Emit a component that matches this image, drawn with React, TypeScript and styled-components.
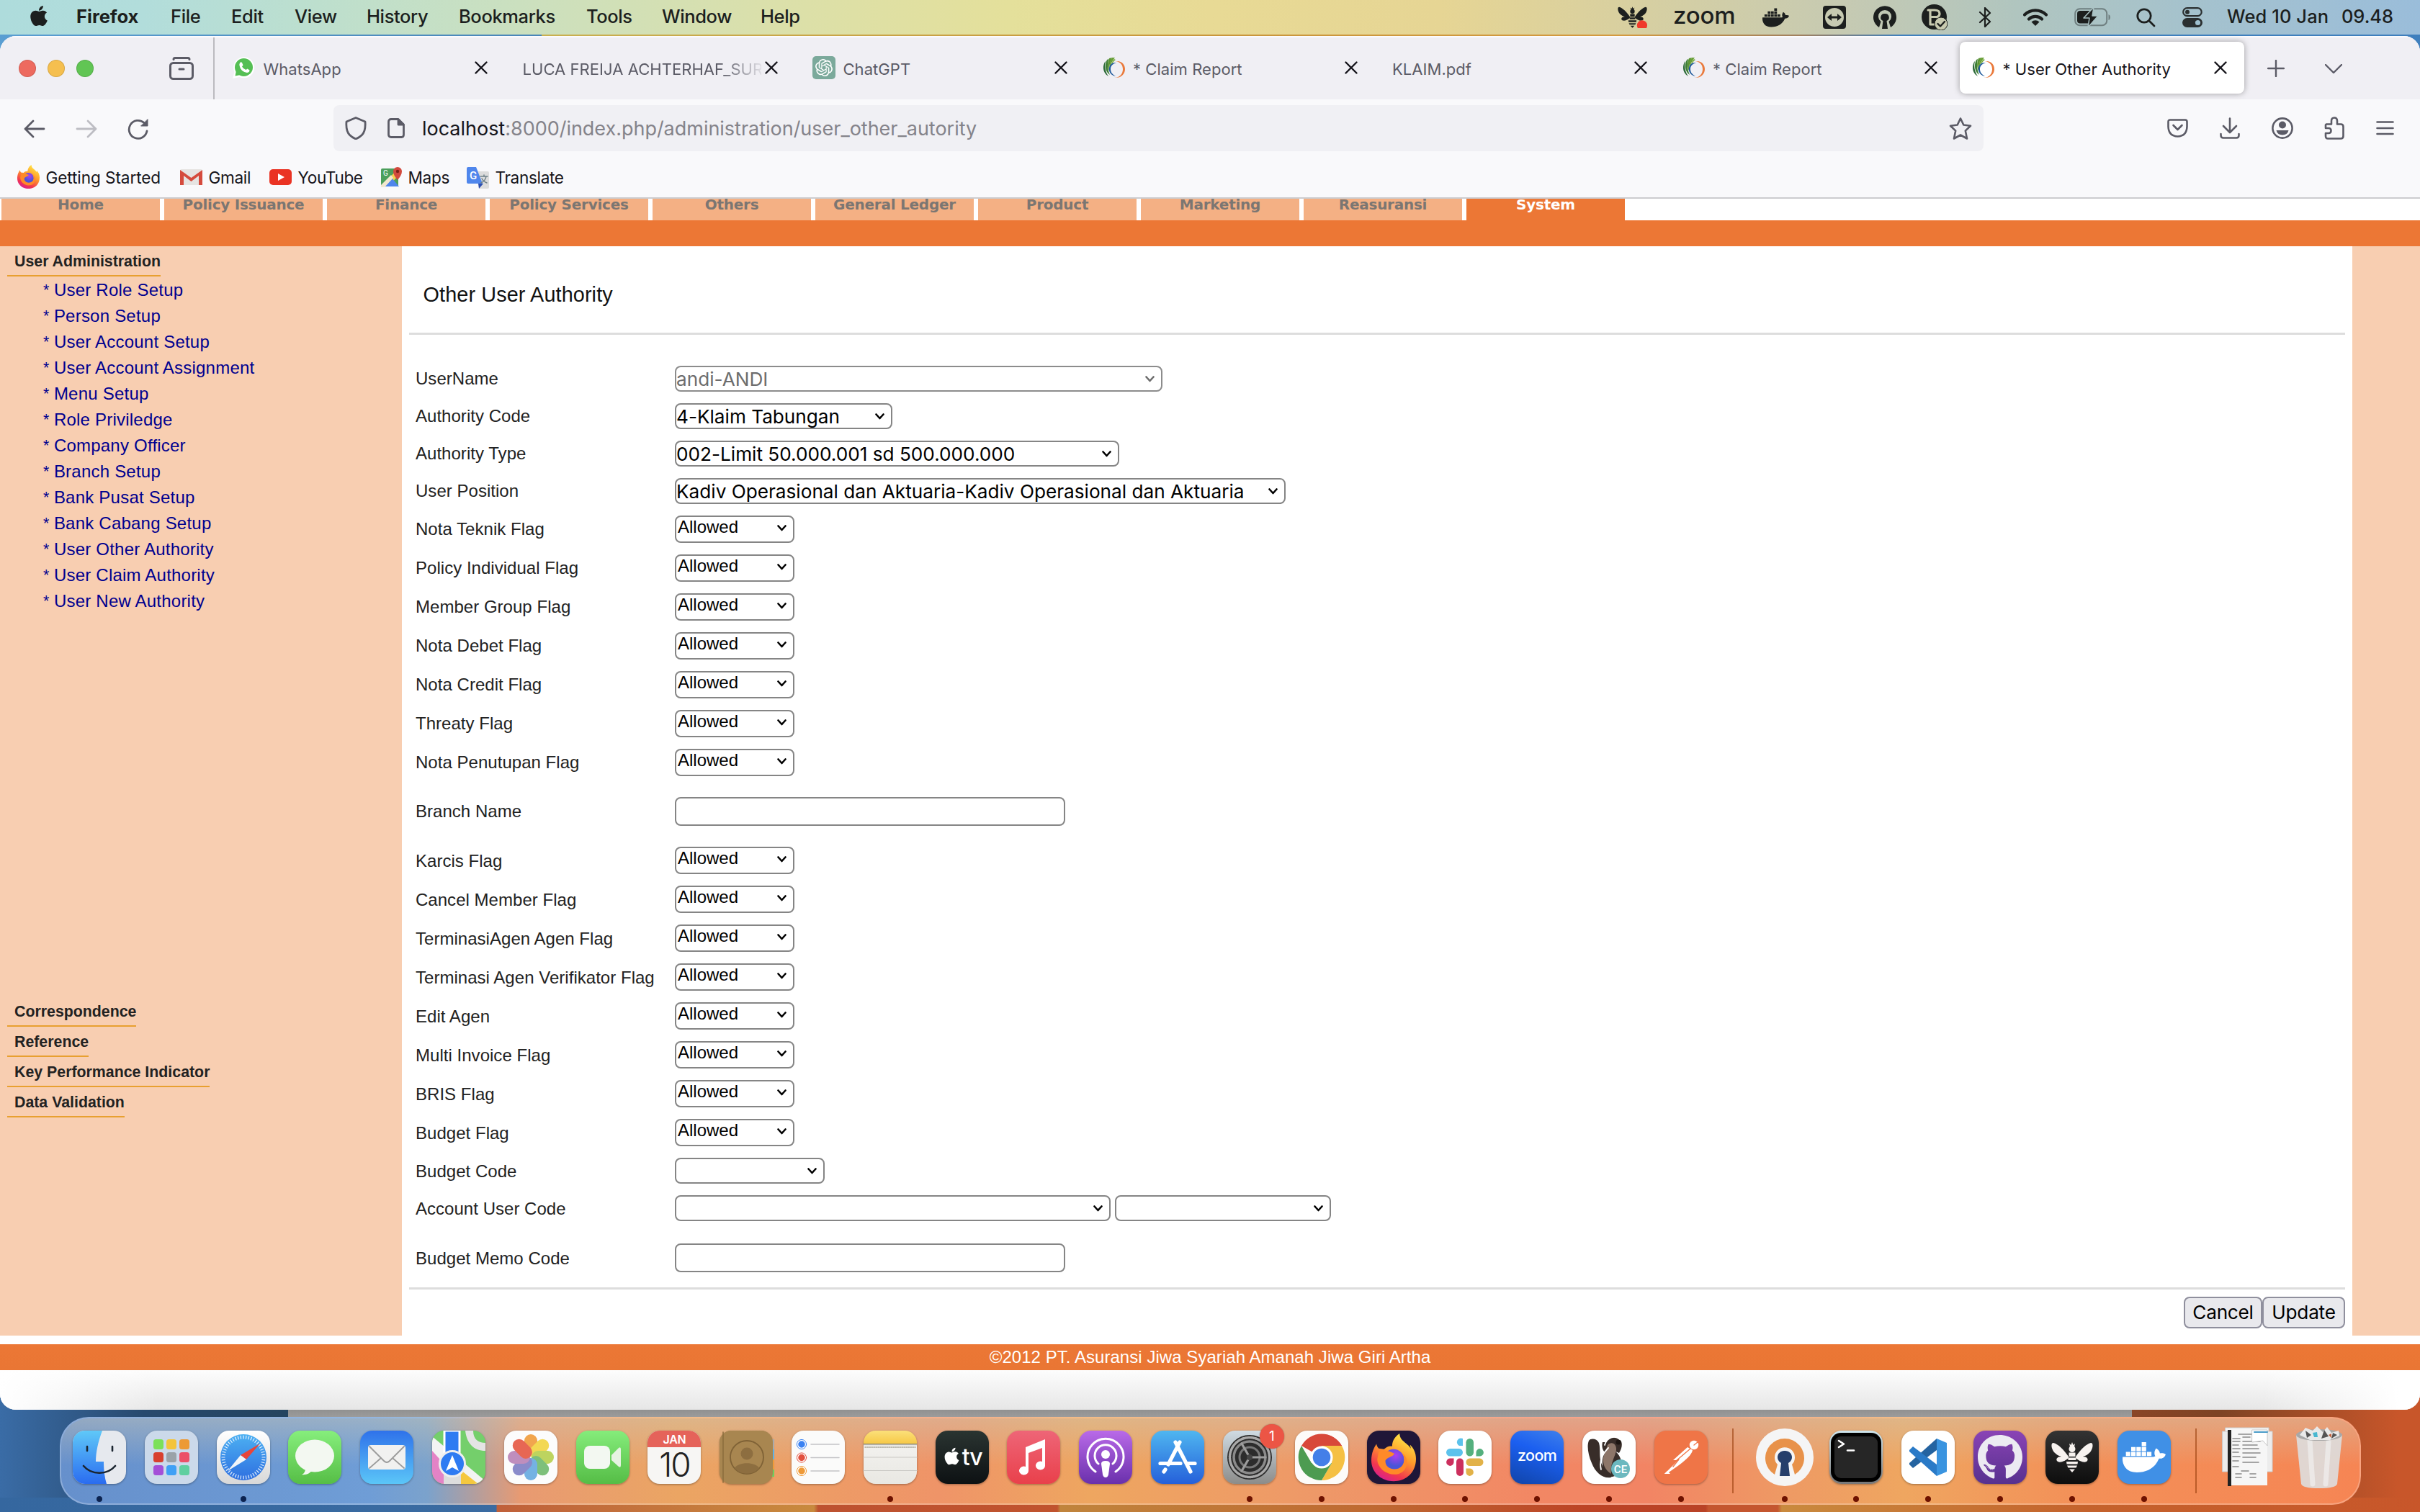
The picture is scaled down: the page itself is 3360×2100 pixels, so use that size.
import React from "react";
import styled, { createGlobalStyle } from "styled-components";
import { FaApple, FaDocker, FaGithub, FaWhatsapp } from "react-icons/fa";
import { SiOpenai } from "react-icons/si";

const UI = `Inter, "Liberation Sans", sans-serif`;
const PAGE = `"Liberation Sans", Arial, sans-serif`;

const Global = createGlobalStyle`
  * { box-sizing: border-box; }
  body { margin: 0; background: #3f7fbd; }
  svg { display: block; flex: none; }
`;

const Desktop = styled.div`
  width: 3360px;
  height: 2100px;
  overflow: hidden;
  display: flex;
  flex-direction: column;
  font-family: ${UI};
  background: linear-gradient(90deg, #5a9ed2 0, #4a86b8 752px, #c9b050 752px, #c9963c 1700px, #d49a40 2250px, #a08060 2500px, #4080bd 2640px, #3f7fbd 3360px);
`;

/* ---------- system menu bar ---------- */

const MenuBar = styled.header`
  height: 48px;
  margin-bottom: 2px;
  flex: none;
  display: flex;
  align-items: center;
  color: #1c1f1e;
  background: linear-gradient(90deg, #aedcdc 0, #b2dddb 200px, #bcdfcf 420px, #cbe0bf 720px, #dbe0aa 1080px, #e4e09b 1400px, #e8da95 1680px, #e6d594 2000px, #d9d09f 2240px, #c6cab2 2560px, #b0c5bf 2800px, #a5c2cd 3040px, #9abdda 3360px);
`;
const MenuApple = styled.div`
  width: 106px;
  padding-left: 38px;
  padding-bottom: 4px;
`;
const MenuItem = styled.span<{ $w: number; $bold?: boolean; $ls?: number }>`
  width: ${(p) => p.$w}px;
  font-size: 25.5px;
  line-height: 48px;
  height: 48px;
  padding-bottom: 2px;
  margin-top: -2px;
  white-space: nowrap;
  font-weight: ${(p) => (p.$bold ? 700 : 500)};
  letter-spacing: ${(p) => p.$ls ?? -0.38}px;
`;
const Tray = styled.div`
  margin-left: auto;
  display: flex;
  align-items: center;
`;
const TrayIcon = styled.div<{ $w: number }>`
  width: ${(p) => p.$w}px;
  height: 48px;
  flex: none;
  display: flex;
  align-items: center;
`;
const ZoomWord = styled.span<{ $size: number; $ls?: number }>`
  font-family: ${UI};
  font-weight: 500;
  font-size: ${(p) => p.$size}px;
  letter-spacing: ${(p) => p.$ls ?? 0}px;
  line-height: 1;
  padding-bottom: 5px;
`;

/* ---------- browser window ---------- */

const Window = styled.main`
  position: relative;
  height: 1908px;
  flex: none;
  display: flex;
  flex-direction: column;
  overflow: hidden;
  border-radius: 22px;
  background: #fff;
`;
const TabStrip = styled.div`
  height: 88px;
  flex: none;
  display: flex;
  background: #f0eff4;
  border-top: 2px solid #fbfbfd;
`;
const Lights = styled.div`
  width: 298px;
  display: flex;
  align-items: center;
  padding-left: 26px;
  gap: 16px;
  border-right: 2px solid #bbbabf;
`;
const Light = styled.i<{ $c: string }>`
  width: 24px;
  height: 24px;
  border-radius: 50%;
  background: ${(p) => p.$c};
  box-shadow: inset 0 0 0 1px rgba(0, 0, 0, 0.12);
`;
const Archive = styled.div`
  margin-left: 89px;
`;
const Tabs = styled.div`
  display: flex;
  align-items: flex-start;
  padding: 6px 0 0 8px;
  gap: 7.5px;
`;
const Tab = styled.div<{ $on?: boolean }>`
  width: 395px;
  height: 72px;
  display: flex;
  align-items: center;
  padding: 0 24px 0 17px;
  border-radius: 8px;
  color: ${(p) => (p.$on ? "#15141a" : "#5b5b66")};
  background: ${(p) => (p.$on ? "#fff" : "transparent")};
  box-shadow: ${(p) => (p.$on ? "0 0 8px rgba(0,0,0,.35)" : "none")};
`;
const TabIcon = styled.div`
  width: 42.5px;
  flex: none;
`;
const TabTitle = styled.span<{ $fade?: boolean }>`
  flex: 1;
  font-size: 22px;
  letter-spacing: 0.05px;
  line-height: 40px;
  padding-top: 3px;
  white-space: nowrap;
  overflow: hidden;
  margin-right: 5px;
  ${(p) => p.$fade && "mask-image: linear-gradient(90deg, #000 83%, transparent 102%);"}
`;
const StripButtons = styled.div`
  display: flex;
  align-items: center;
  padding: 0 0 0 32px;
  gap: 56px;
`;

const Toolbar = styled.div`
  height: 80px;
  flex: none;
  background: #f9f9fb;
  display: flex;
  align-items: flex-start;
  padding: 8px 36px 0 33px;
  color: #5b5b66;
`;
const NavButtons = styled.div`
  width: 430px;
  height: 66px;
  display: flex;
  align-items: center;
  gap: 42px;
`;
const UrlBar = styled.div`
  width: 2291px;
  height: 64px;
  border-radius: 8px;
  background: #f0f0f4;
  display: flex;
  align-items: center;
  padding: 0 16px;
`;
const Url = styled.span`
  margin-left: 24px;
  padding-top: 1px;
  flex: 1;
  font-size: 27px;
  letter-spacing: -0.02px;
  color: #84838a;
  b { font-weight: 400; color: #15141a; }
`;
const UrlIcons = styled.div`
  display: flex;
  align-items: center;
  gap: 29px;
`;
const ToolIcons = styled.div`
  flex: 1;
  height: 64px;
  padding-left: 255px;
  display: flex;
  align-items: center;
  justify-content: space-between;
`;
const Bookmarks = styled.div`
  height: 58px;
  flex: none;
  display: flex;
  align-items: center;
  padding-left: 24px;
  background: #f9f9fb;
  border-bottom: 2px solid #cccccf;
`;
const Bookmark = styled.div<{ $w: number; $ls?: number }>`
  width: ${(p) => p.$w}px;
  display: flex;
  align-items: center;
  gap: 8.5px;
  font-size: 22.6px;
  letter-spacing: ${(p) => p.$ls ?? -0.35}px;
  color: #15141a;
  white-space: nowrap;
`;

/* ---------- application page ---------- */

const ModuleNav = styled.nav`
  height: 30px;
  flex: none;
  display: flex;
  gap: 6px;
  padding-left: 2px;
  overflow: hidden;
`;
const ModuleTab = styled.a<{ $on?: boolean }>`
  width: 220px;
  height: 30px;
  text-align: center;
  font-family: "DejaVu Sans", Verdana, sans-serif;
  font-weight: 700;
  font-size: 20px;
  letter-spacing: -0.25px;
  line-height: 16px;
  color: ${(p) => (p.$on ? "#fff" : "#7b7672")};
  background: ${(p) => (p.$on ? "#ec7735" : "#f4b084")};
`;
const OrangeBand = styled.div`
  height: 36px;
  flex: none;
  background: #ec7735;
`;
const Columns = styled.div`
  height: 1513px;
  flex: none;
  display: flex;
`;
const Sidebar = styled.aside`
  width: 558px;
  background: #f8ceb1;
  padding-left: 10px;
  font-family: ${PAGE};
`;
const RightStrip = styled.div`
  width: 94px;
  background: #f8ceb1;
`;
const GroupTitle = styled.h3`
  margin: 0;
  height: 42px;
  width: max-content;
  padding: 8px 0 0 10px;
  border-bottom: 2px solid #e8a030;
  font-size: 21.33px;
  line-height: 26px;
  font-weight: 700;
  color: #222;
`;
const MenuList = styled.ul`
  list-style: none;
  margin: 0;
  padding: 1px 0 0 50px;
  height: 1000px;
`;
const MenuLink = styled.li`
  height: 36px;
  line-height: 36px;
  font-size: 24px;
  letter-spacing: 0.22px;
  color: #00008f;
  display: flex;
`;
const Star = styled.span`
  width: 8px;
  font-size: 21.33px;
`;
const Content = styled.section`
  flex: 1;
  padding: 0 10px;
  font-family: ${PAGE};
  color: #222;
`;
const Title = styled.h2`
  margin: 0;
  height: 123px;
  padding: 51px 0 0 19.500px;
  border-bottom: 3px solid #ddd;
  font-weight: 400;
  font-size: 28.8px;
  line-height: 33px;
  letter-spacing: 0.12px;
  color: #111;
`;
const Form = styled.div`
  padding: 35px 0 0 9px;
  height: 1323px;
`;
const Row = styled.div<{ $h: number; $top?: number }>`
  height: ${(p) => p.$h}px;
  padding-top: ${(p) => p.$top ?? 0}px;
  display: flex;
  align-items: center;
`;
const Label = styled.label<{ $low?: boolean }>`
  width: 360px;
  padding-top: ${(p) => (p.$low ? 2 : 0)}px;
  font-size: 24px;
  letter-spacing: 0.03px;
  white-space: nowrap;
`;
const Box = styled.div<{ $w: number; $h: number; $flag?: boolean; $off?: boolean }>`
  width: ${(p) => p.$w}px;
  height: ${(p) => p.$h}px;
  display: flex;
  justify-content: space-between;
  align-items: center;
  border: 2px solid ${(p) => (p.$off ? "#8c8c8c" : "#858585")};
  border-radius: 8px;
  padding: ${(p) => (p.$flag ? "0 9px 4px 2px" : "0 9px 0 0")};
  background: #fff;
  color: ${(p) => (p.$off ? "#6d6d6d" : "#000")};
  font-family: ${(p) => (p.$flag ? PAGE : UI)};
  font-size: ${(p) => (p.$flag ? 24 : 26.2)}px;
  line-height: 28px;
  letter-spacing: ${(p) => (p.$flag ? 0 : -0.01)}px;
  white-space: nowrap;
  & + & { margin-left: 6px; }
  span { padding: ${(p) => (p.$flag ? "0 0 3px" : "1px 0 0")}; }
`;
const Actions = styled.div`
  border-top: 3px solid #ddd;
  display: flex;
  justify-content: flex-end;
  padding-top: 10px;
`;
const Button = styled.div<{ $w: number }>`
  width: ${(p) => p.$w}px;
  height: 44px;
  border: 2px solid #8f8f9d;
  border-radius: 8px;
  background: #e9e9ed;
  color: #000;
  font-family: ${UI};
  font-size: 26.2px;
  letter-spacing: -0.25px;
  line-height: 40px;
  text-align: center;
`;
const Footer = styled.div`
  margin-top: 12px;
  height: 36px;
  flex: none;
  background: linear-gradient(#ec7735, #e97634);
  color: #fff;
  font-family: ${PAGE};
  font-size: 24px;
  letter-spacing: 0.05px;
  line-height: 36px;
  text-align: center;
`;
const PageEnd = styled.div`
  flex: 1;
  background: linear-gradient(90deg, #fff 0, rgba(255, 255, 255, 0) 220px, rgba(255, 255, 255, 0) 3140px, #fff 3330px),
    linear-gradient(#fdfdfd, #e6e6e6);
`;

/* ---------- dock ---------- */

const DockArea = styled.div`
  flex: 1;
  margin-top: -30px;
  padding: 40px 0 0 83px;
  background:
    linear-gradient(#8f8f8f, #9d9d9d) 400px 29px / 2560px 12px no-repeat,
    linear-gradient(90deg, #35679f 0, #3a6ba1 689px, #c0603a 690px, #c88a3e 1130px, #bd5230 1136px, #c0532e 1468px, #c0843c 1472px, #bf6a32 1900px, #bc4426 2200px, #b94226 2368px, #c4562f 2372px, #c4562f 2468px, #c98a3e 2474px, #c4622c 2900px, #c8562a 3360px) 0 100% / 100% 20px no-repeat,
    linear-gradient(90deg, #3a6ca6 0, #27496e 200px, #24445f 400px, #8a4526 2960px, #7d4324 3080px, #c8562a 3330px);
`;
const Dock = styled.div`
  width: 3195px;
  height: 122px;
  display: flex;
  padding-left: 3px;
  border-radius: 40px;
  border: 2px solid rgba(255, 255, 255, 0.25);
  background: linear-gradient(180deg, rgba(205, 200, 180, 0.45), rgba(205, 200, 180, 0) 55%) padding-box,
    linear-gradient(90deg, #6690cc 0, #6f9dd6 430px, #7ba2cc 510px, #e89a72 640px, #eba563 860px, #ef9468 1220px, #eea660 1430px, #ee9868 1750px, #f28764 2050px, #f28464 2200px, #ee9a64 2400px, #efa660 2560px, #f39058 2800px, #f68554 3195px) border-box;
  background-color: #e89a72;
`;
const Slot = styled.div`
  width: 99.82px;
  flex: none;
  display: flex;
  flex-direction: column;
  align-items: center;
  padding-top: 17px;
`;
const Divider = styled.div`
  width: 44px;
  flex: none;
  display: flex;
  justify-content: center;
  padding-top: 14px;
  &::before { content: ""; width: 2px; height: 90px; background: rgba(150, 60, 10, 0.6); }
`;
const Tile = styled.div<{ $bg: string; $plain?: boolean }>`
  position: relative;
  width: 74px;
  height: 74px;
  flex: none;
  border-radius: 17px;
  display: flex;
  align-items: center;
  justify-content: center;
  color: #fff;
  background: ${(p) => p.$bg};
  box-shadow: ${(p) => (p.$plain ? "none" : "0 1px 3px rgba(0,0,0,.35)")};
  svg { overflow: visible; }
`;
const Clip = styled.div`
  width: 74px;
  height: 74px;
  border-radius: 17px;
  overflow: hidden;
`;
const Dot = styled.i<{ $c: string }>`
  width: 8px;
  height: 8px;
  margin-top: 17px;
  border-radius: 50%;
  background: ${(p) => p.$c};
`;
const Badge = styled.span`
  position: absolute;
  left: 51px;
  top: -9px;
  width: 34px;
  height: 34px;
  border-radius: 50%;
  background: #ec5545;
  font-size: 19px;
  line-height: 34px;
  text-align: center;
  box-shadow: 0 0 2px rgba(0, 0, 0, 0.4);
`;
const Calendar = styled.div`
  width: 74px;
  height: 74px;
  text-align: center;
  color: #222;
  font-size: 46px;
  line-height: 48px;
  letter-spacing: -2px;
  font-weight: 300;
  border-radius: 17px;
  overflow: hidden;
  b {
    display: block;
    height: 23px;
    background: #e5635a;
    color: #fff;
    font-size: 16px;
    font-weight: 600;
    line-height: 25px;
    letter-spacing: -0.3px;
  }
`;
const TvWord = styled.div`
  display: flex;
  align-items: center;
  font-size: 32px;
  font-weight: 500;
  letter-spacing: -1px;
  line-height: 32px;
  svg { margin: 0 1px 4px 0; }
`;

const S: React.FC<{ w?: number; h?: number; vb?: string; sw?: number; stretch?: boolean; children: React.ReactNode }> = ({ w = 74, h = w, vb, sw, stretch, children }) => (
  <svg width={w} height={h} viewBox={vb ?? `0 0 ${w} ${h}`} preserveAspectRatio={stretch ? "none" : undefined} fill="none" stroke={sw ? "currentColor" : "none"} strokeWidth={sw} strokeLinecap="round" strokeLinejoin="round">
    {children}
  </svg>
);

const CloseX = () => (
  <S w={18} sw={2.4}>
    <g stroke="#15141a"><path d="M1.5 1.5 16.5 16.5M16.5 1.5 1.5 16.5" /></g>
  </S>
);

const Swirl = () => (
  <S w={31} h={30}>
    <path d="M3 7C-1 15 1 23 8 27C4 21 2 14 4 6Z" fill="#2f6b3a" />
    <path d="M6 4C2 12 4 21 10 25C7 18 6 11 8 3Z" fill="#3f7f35" />
    <path d="M9 2C6 9 7 15 9 19C9 13 10 7 13 1Z" fill="#5b9434" />
    <path d="M13 1C10 6 9 11 10 15C11 10 13 6 17 1Z" fill="#69a036" />
    <path d="M16 3C13 6 12 9 12 12C13 9 15 6 18 4Z" fill="#7aad3e" />
    <path d="M19 8C11 7 8 14 9 19C10 23 13 26 18 27C13 24 11 21 11 17C11 13 13 10 19 8Z" fill="#1f5a9c" />
    <path d="M18 6C27 5 31 11 31 17C31 24 25 30 16 29C24 29 28 23 28 17C28 12 25 7 18 6Z" fill="#ea7a3c" />
  </S>
);

const Chevron: React.FC<{ c?: string }> = ({ c = "#000" }) => (
  <S w={13} h={9} sw={2.6}><g stroke={c}><path d="M1.5 1.5 6.5 7 11.5 1.5" /></g></S>
);

/* wings, head and striped body on a 58 x 42 grid */
const BeePath = () => (
  <g>
    <path d="M24 20C18 11 9 2 3 1C-1 1 0 9 4 14C8 18 11 19 14 20C9 20 6 23 8 26C11 30 20 26 24 22Z" />
    <path d="M34 20C40 11 49 2 55 1C59 1 58 9 54 14C50 18 47 19 44 20C49 20 52 23 50 26C47 30 38 26 34 22Z" />
    <path d="M25 2 27.500 4 29 0 30.500 4 33 2 32 6H26Z" />
    <circle cx="29" cy="9.500" r="4.500" />
    <path d="M24.500 14.500H33.500V20H24.500ZM23.500 21.500H34.500V25H23.500ZM21 27H37L36.500 30.500H21.500ZM22 32.500H36L34.500 35.500H23.500ZM25 37.500H33L29 42Z" />
  </g>
);

const FoxLogo: React.FC<{ s: number }> = ({ s }) => (
  <S w={s} h={s * 1.07} vb="0 0 60 64">
    <defs>
      <linearGradient id="fx" x1=".8" y1="0" x2=".3" y2="1"><stop stopColor="#fff04a" /><stop offset=".45" stopColor="#ff9a2a" /><stop offset=".8" stopColor="#f2364f" /><stop offset="1" stopColor="#d81f90" /></linearGradient>
      <radialGradient id="fp" cx=".6" cy=".3"><stop stopColor="#b13df0" /><stop offset="1" stopColor="#4a55d8" /></radialGradient>
    </defs>
    <path d="M7 14C4 18 0 26 0 36C0 52 13 64 30 64C47 64 60 52 60 34C60 26 57 20 52 15L53 20C48 12 38 10 38 0C30 5 28 12 28 17C24 16 20 18 17 21L10 20C8 18 7 16 7 14Z" fill="url(#fx)" />
    <circle cx="30" cy="35" r="14" fill="url(#fp)" />
    <path d="M10 24C18 21 25 24 31 27C28 32 22 31 19 36C18 44 26 50 36 47C45 44 46 34 42 27C51 32 50 50 37 54C22 58 8 47 8 34Z" fill="#ff8a28" />
  </S>
);

const tabs: { title: string; icon?: React.ReactNode; on?: boolean; fade?: boolean }[] = [
  { title: "WhatsApp", icon: <S w={30} h={32}><path d="M0 31 2.500 22A14.500 14.500 0 1 1 9.500 29Z" fill="#fff" /><circle cx="15.500" cy="15.500" r="12.500" fill="#55bf54" /><path d="M3.500 27.500 5 20 11 26Z" fill="#55bf54" /><path d="M10 9.500Q11.500 7.500 13 9L14.500 12.500L13 14.500Q15 18 18.500 19L20.500 17.500L23.500 19.500Q23.500 22.500 20 23Q11 21.500 9.500 13Q9 11 10 9.500Z" fill="#fff" /></S> },
  { title: "LUCA FREIJA ACHTERHAF_SUR", fade: true },
  { title: "ChatGPT", icon: <S w={32}><rect width="32" height="32" rx="5" fill="#7ba99b" /><g color="#fff"><SiOpenai x={4} y={4} size={24} /></g></S> },
  { title: "* Claim Report", icon: <Swirl /> },
  { title: "KLAIM.pdf" },
  { title: "* Claim Report", icon: <Swirl /> },
  { title: "* User Other Authority", icon: <Swirl />, on: true },
];

const menus: [string, number][] = [["File", 84], ["Edit", 88], ["View", 100], ["History", 128], ["Bookmarks", 177], ["Tools", 105], ["Window", 137], ["Help", 60]];

const modules = ["Home", "Policy Issuance", "Finance", "Policy Services", "Others", "General Ledger", "Product", "Marketing", "Reasuransi", "System"];
const links = ["User Role Setup", "Person Setup", "User Account Setup", "User Account Assignment", "Menu Setup", "Role Priviledge", "Company Officer", "Branch Setup", "Bank Pusat Setup", "Bank Cabang Setup", "User Other Authority", "User Claim Authority", "User New Authority"];
const groups = ["Correspondence", "Reference", "Key Performance Indicator", "Data Validation"];
const choices: [string, string, number, boolean?][] = [
  ["UserName", "andi-ANDI", 677, true],
  ["Authority Code", "4-Klaim Tabungan", 302],
  ["Authority Type", "002-Limit 50.000.001 sd 500.000.000", 617],
  ["User Position", "Kadiv Operasional dan Aktuaria-Kadiv Operasional dan Aktuaria", 848],
];
const flagsA = ["Nota Teknik Flag", "Policy Individual Flag", "Member Group Flag", "Nota Debet Flag", "Nota Credit Flag", "Threaty Flag", "Nota Penutupan Flag"];
const flagsB = ["Karcis Flag", "Cancel Member Flag", "TerminasiAgen Agen Flag", "Terminasi Agen Verifikator Flag", "Edit Agen", "Multi Invoice Flag", "BRIS Flag", "Budget Flag"];

const FlagRow: React.FC<{ name: string; low?: boolean }> = ({ name, low }) => (
  <Row $h={54}>
    <Label $low={low}>{name}</Label>
    <Box $w={166} $h={38} $flag><span>Allowed</span><Chevron /></Box>
  </Row>
);

const petals = ["#f09a37", "#f2d43c", "#b5cf4a", "#6db86a", "#62a8e0", "#7b7cc4", "#b77fb5", "#e5533d"];
const pads = ["#7be05a", "#f4c43a", "#ec9a35", "#d8402f", "#9aa2a8", "#ec5068", "#a44fd8", "#3fa0f5", "#5fcfa0"];
const ticks = Array.from({ length: 48 }, (_, i) => i * 7.5);

const blue = "#0c2350";
const red = "#6e1200";
const dockLeft: { bg: string; art: React.ReactNode; dot?: string; plain?: boolean }[] = [
  { bg: "#e6e9ee", dot: blue, art: <Clip><S><defs><linearGradient id="fi" x2="0" y2="1"><stop stopColor="#5fc8f8" /><stop offset="1" stopColor="#2a6cf0" /></linearGradient></defs><path d="M0 0H41C35 16 32 30 32 43H43C43 54 44 64 47 74H0Z" fill="url(#fi)" /><g stroke="#1a2530" strokeWidth="2.600" strokeLinecap="round"><path d="M20 22V28M55 22V28M15 49C26 62 48 62 59 49" /></g></S></Clip> },
  { bg: "#cbd9ea", art: <S>{pads.map((c, i) => <rect key={i} x={12 + (i % 3) * 18} y={12 + Math.floor(i / 3) * 18} width="14" height="14" rx="3.500" fill={c} />)}</S> },
  { bg: "linear-gradient(#fff,#d8d8d8)", dot: blue, art: <S><defs><linearGradient id="sf" x2="0" y2="1"><stop stopColor="#4cb0f2" /><stop offset="1" stopColor="#2e6fe0" /></linearGradient></defs><circle cx="37" cy="37" r="32" fill="url(#sf)" /><g stroke="#e6f2ff" strokeWidth="1.200">{ticks.map((a) => <path key={a} d="M37 7V11" transform={`rotate(${a} 37 37)`} />)}</g><path d="M60 18 41 40 33 34Z" fill="#e8453a" /><path d="M15 56 33 34 41 40Z" fill="#f2f5f8" /></S> },
  { bg: "linear-gradient(#86ee7c,#56be46)", art: <S><ellipse cx="37" cy="35" rx="27" ry="22.500" fill="#f3f8f1" /><path d="M24 52C24 57 22 60 19 61C25 62 31 59 33 55Z" fill="#f3f8f1" /></S> },
  { bg: "linear-gradient(#2f72ea,#5bc6f8)", art: <S><rect x="11" y="20" width="52" height="34" rx="4" fill="#f1f1f0" /><path d="M13 22 33 42Q37 46 41 42L61 22M13 52 29 38M61 52 45 38" stroke="#9b9b9b" strokeWidth="1.800" /></S> },
  { bg: "#75cf6c", art: <Clip><S><rect width="74" height="74" fill="#74cf6b" /><path d="M0 8 74 70V84L0 34Z" fill="#f3f3f3" /><path d="M0 28 20 50V74H0Z" fill="#e383c6" /><path d="M46 0C48 18 58 28 74 28V17C64 17 57 12 57 0Z" fill="#e4e4e4" /><path d="M40 74 40 55 64 74Z" fill="#f5c83f" /><path d="M16 40H40V74H16Z" fill="#ddd" /><path d="M17 0H38V40H17Z" fill="#2e7bf2" stroke="#fff" strokeWidth="3" /><circle cx="28" cy="46" r="17.500" fill="#2e7bf2" stroke="#eee" strokeWidth="3" /><path d="M28 34 37 56 28 51 19 56Z" fill="#fff" /></S></Clip> },
  { bg: "#fcfcfc", art: <S><g opacity=".88">{petals.map((c, i) => <rect key={c} x="28" y="5" width="18" height="31" rx="9" fill={c} transform={`rotate(${i * 45} 37 37)`} />)}</g></S> },
  { bg: "linear-gradient(#85ec7b,#55bd46)", art: <S><rect x="11" y="21" width="36" height="32" rx="8" fill="#f3f8f1" /><path d="M49 34 59 24Q62 22 62 26V48Q62 52 59 50L49 41Z" fill="#e6f3e2" /></S> },
  { bg: "#f7f6f4", art: <Calendar><b>JAN</b>10</Calendar> },
  { bg: "#a5834f", art: <S><path d="M72 12H76V26H72Z" fill="#aaa" /><path d="M72 26H76V40H72Z" fill="#5fb2e8" /><path d="M72 40H76V54H72Z" fill="#f09a3a" /><path d="M72 54H76V64H72Z" fill="#6fce5e" /><rect width="74" height="74" rx="16" fill="#a88650" /><path d="M5 2V72" stroke="#8a6b3c" strokeWidth="1.500" /><circle cx="38" cy="37" r="23" stroke="#7f6236" strokeWidth="1.800" /><circle cx="38" cy="32" r="8.500" fill="#8d6e40" /><path d="M21 52C26 43 50 43 55 52C47 62 29 62 21 52Z" fill="#8d6e40" /></S> },
  { bg: "#fbfbfa", art: <S>{["#3a82f2", "#e2513f", "#ef9a38"].map((c, i) => <g key={c}><circle cx="14" cy={19 + i * 18.5} r="5.500" fill={c} stroke="#fff" strokeWidth="1.500" /><circle cx="14" cy={19 + i * 18.5} r="6.600" stroke={c} strokeWidth="1" /><path d={`M27 ${19 + i * 18.5}H66`} stroke="#c4c4c6" strokeWidth="1.500" /></g>)}</S> },
  { bg: "linear-gradient(#fbe07a 0,#f7c948 24%,#8f8a78 25%,#f2f1ee 28%,#e9e8e3)", dot: red, art: <S><path d="M2 23H72" stroke="#a9a69b" strokeWidth="1.500" strokeDasharray="1.500 1.500" /><path d="M0 37H74M0 55.500H74" stroke="#c9c8c4" strokeWidth="1.200" /></S> },
  { bg: "linear-gradient(#2a3431,#0d1113)", art: <TvWord><FaApple size={27} />tv</TvWord> },
  { bg: "linear-gradient(#ee6577,#e9404b)", art: <S><path d="M26 23 53 12V48A6.500 6 0 1 1 49 43V24L30 31V55A6.500 6 0 1 1 26 50Z" fill="#fff" /></S> },
  { bg: "linear-gradient(#b96ae8,#6a30ac)", art: <S><g stroke="#fff" strokeWidth="3" strokeLinecap="round"><path d="M23 57A25 25 0 1 1 51 57" /><path d="M27 46A15 15 0 1 1 47 46" /></g><circle cx="37" cy="33" r="6" fill="#fff" /><path d="M31 46Q31 42 37 42Q43 42 43 46L41 61Q40 65 37 65Q34 65 33 61Z" fill="#fff" /></S> },
  { bg: "linear-gradient(#4fb6f0,#2560da)", art: <S><g stroke="#fff" strokeWidth="5.200" strokeLinecap="round"><path d="M40 16 24 47M20 54 18 57M34 16 55 57M13 45.500H41M52 45.500H61" /></g></S> },
  { bg: "linear-gradient(#cfdbe3,#8c8c8a)", dot: red, art: <><S><circle cx="37" cy="37" r="31" fill="#2c2c2c" /><circle cx="37" cy="37" r="27.500" stroke="#a9a9a9" strokeWidth="3.500" strokeDasharray="1.800 1.400" /><circle cx="37" cy="37" r="22" stroke="#8b8b8b" strokeWidth="3.500" /><circle cx="37" cy="37" r="14" stroke="#777" strokeWidth="3" /><g stroke="#9c9c9c" strokeWidth="3.200"><path d="M37 37H59M37 37 26 18M37 37 26 56" /></g><circle cx="37" cy="37" r="4" fill="#444" /></S><Badge>1</Badge></> },
  { bg: "#fdfbf9", dot: red, art: <S><path d="M37 37 9 21A32 32 0 0 1 65 21H37Z" fill="#d8483a" /><path d="M37 5A32 32 0 0 1 65 21H37Z" fill="#d8483a" /><path d="M65 21A32 32 0 0 1 37 69L51 45 37 21Z" fill="#f5c043" /><path d="M9 21A32 32 0 0 0 37 69L51 45 23 45Z" fill="#4d9b51" /><circle cx="37" cy="37" r="15.500" fill="#fff" /><circle cx="37" cy="37" r="12.300" fill="#447fe8" /></S> },
  { bg: "#1f1638", dot: red, art: <FoxLogo s={62} /> },
  { bg: "#fff", dot: red, art: <S><g fill="#5cc2ec"><path d="M34 11V21H29A5 5 0 1 1 34 11Z" /><rect x="11" y="25" width="23" height="10.500" rx="5.200" /></g><g fill="#55b07e"><rect x="38.500" y="11" width="10.500" height="24.500" rx="5.200" /><path d="M52.500 35.500V30A5.200 5.200 0 1 1 58 35.500Z" /></g><g fill="#e2b248"><rect x="38.500" y="38.500" width="24" height="10.500" rx="5.200" /><path d="M38.500 52.500H44A5.200 5.200 0 1 1 38.500 58Z" /></g><g fill="#cc2f5d"><rect x="25" y="38.500" width="10" height="24.500" rx="5" /><path d="M21.500 38.500V44A5.200 5.200 0 1 1 16 38.500Z" /></g></S> },
  { bg: "linear-gradient(200deg,#3f80ea,#1b5ff0 40%,#1044a8)", dot: red, art: <ZoomWord $size={21.5} $ls={-0.6}>zoom</ZoomWord> },
  { bg: "#fff", dot: red, art: <S><path d="M9 14C12 10 20 11 23 17C26 27 22 38 28 49C32 56 37 60 40 65C28 67 18 58 13 45C8 34 6 21 9 14Z" fill="#382d29" /><path d="M28 16H33C36 8 49 7 54 15C56 20 54 26 51 31L46 29C52 34 54 40 55 48C54 60 44 66 36 64C26 54 26 40 31 30C27 26 27 20 28 16Z" fill="#382d29" /><path d="M35 20C40 14 48 18 47 27C46 36 38 46 40 60C30 54 26 42 31 32Z" fill="#8d7669" /><circle cx="50" cy="16" r="3.500" fill="#1d1613" /><path d="M31 20C34 9 45 6 52 12M26 54C23 42 28 32 36 24" stroke="#fff" strokeWidth="1.800" /><circle cx="53" cy="53" r="13" fill="#6cb8bf" /><text x="53" y="58.500" fontFamily="Roboto, sans-serif" fontSize="15" fontWeight="500" textAnchor="middle" fill="#fff">CE</text></S> },
  { bg: "#ef7547", dot: red, art: <S><circle cx="55" cy="20" r="6.200" fill="#fff" /><path d="M46 23 53 27C52 34 42 42 34 48L17 60H14L24 50 33 41 26 41Z" fill="#fff" /><path d="M14 60 18 56 22 60Z" fill="#fff" /><path d="M55 20 60 16M50 25 30 42M34 40 26 50" stroke="#ef7547" strokeWidth="1.300" /></S> },
];
const dockRight: typeof dockLeft = [
  { bg: "transparent", plain: true, dot: red, art: <S w={80} vb="0 0 80 80"><circle cx="40" cy="40" r="40" fill="#f5f5f5" /><path d="M26 64A27 27 0 1 1 54 64L50 50A14 14 0 1 0 30 50Z" fill="#e8924a" /><path d="M40 31A9 9 0 0 1 45 48L47 66H33L35 48A9 9 0 0 1 40 31Z" fill="#263f6b" /></S> },
  { bg: "linear-gradient(#cfe6ee,#777)", dot: red, art: <S><rect x="2" y="3" width="70" height="68" rx="14" fill="#000" /><rect x="7" y="8" width="60" height="58" rx="9" fill="#262626" /><path d="M13 14 20 18.500 13 23M25 27.500H34" stroke="#fff" strokeWidth="2.600" /></S> },
  { bg: "#fff", dot: red, art: <S><path d="M49 11V27L16 52 11 47V45Z" fill="#2463a0" /><path d="M49 63V47L16 22 11 27V29Z" fill="#2a7ac7" /><path d="M49 11 63 17V57L49 63Z" fill="#3a94e0" /></S> },
  { bg: "linear-gradient(#8a43b5,#57318f)", dot: red, art: <FaGithub size={64} color="#eceaf2" /> },
  { bg: "linear-gradient(#333,#0d0d0d)", dot: red, art: <S w={58} h={42}><g fill="#f7f2ef"><BeePath /></g></S> },
  { bg: "#4090e6", dot: red, art: <FaDocker size={60} /> },
];

const Docs = () => (
  <S w={69} h={82}>
    <rect x="4" y="0" width="60" height="60" fill="#f7f7f7" stroke="#ccc" />
    <rect x="0" y="5" width="69" height="56" fill="#ececec" stroke="#ccc" />
    <path d="M7 3H62V80H7Z" fill="#f6f6f6" />
    <path d="M7 3H12V81H7Z" fill="#222" />
    <path d="M22 9H44M14 15H24M28 13H38M14 19H24M28 19H52M14 24H22M28 24H48M14 29H24M28 29H50M14 34H22M28 35H52M14 40H24M28 41H46M14 46H22M28 48H50M14 54H22M26 60H36M18 64H26M38 64H46M18 69H26M38 69H46" stroke="#8b8b8b" strokeWidth="1.600" />
    <path d="M41 3H62V25L56 18 41 20Z" fill="#fff" stroke="#bbb" strokeWidth=".8" />
    <path d="M44 6H62" stroke="#4a9cc8" strokeWidth="2" />
  </S>
);
const Trash = () => (
  <S w={66} h={86}>
    <path d="M1 12H65L58 80Q56 86 33 86Q10 86 8 80Z" fill="#dedcda" fillOpacity=".93" />
    <path d="M20 20 24 80M46 22 42 80" stroke="#f4f4f4" strokeWidth="7" opacity=".6" />
    <ellipse cx="33" cy="12" rx="32" ry="8" fill="#a8a8a8" />
    <path d="M6 12 14 2 24 6 30 0 38 8 44 1 50 9 60 6 61 13 48 19 20 19Z" fill="#e9e9e9" />
    <path d="M14 6 22 12 16 16ZM40 5 46 14 36 17ZM52 9 58 12 50 17Z" fill="#555" />
    <path d="M24 9 30 8 31 15 26 15Z" fill="#49b7d0" />
    <path d="M46 12 50 10 50 16Z" fill="#c0603a" />
  </S>
);

export default function App() {
  return (
    <Desktop>
      <Global />
      <MenuBar>
        <MenuApple><FaApple size={32} /></MenuApple>
        <MenuItem $w={131} $bold $ls={0}>Firefox</MenuItem>
        {menus.map(([m, w]) => <MenuItem key={m} $w={w}>{m}</MenuItem>)}
        <Tray>
          <TrayIcon $w={77}><S w={41} h={30} vb="0 0 58 42"><g fill="#1c1f1e"><BeePath /></g><circle cx="48" cy="37" r="10" fill="#f0392b" /></S></TrayIcon>
          <TrayIcon $w={124}><ZoomWord $size={33} $ls={-0.2}>zoom</ZoomWord></TrayIcon>
          <TrayIcon $w={84}><FaDocker size={37} /></TrayIcon>
          <TrayIcon $w={70}><S w={32}><path fillRule="evenodd" d="M4 0H28Q32 0 32 4V28Q32 32 28 32H4Q0 32 0 28V4Q0 0 4 0ZM16 3A13 13 0 1 0 16 29A13 13 0 1 0 16 3Z" fill="#1c1f1e" /><path d="M6 16 12 11V14.500H20V11L26 16 20 21V17.500H12V21Z" fill="#1c1f1e" /></S></TrayIcon>
          <TrayIcon $w={67}><S w={32}><path d="M8 30A16 16 0 1 1 24 30L21.500 22A9 9 0 1 0 10.500 22Z" fill="#1c1f1e" /><path d="M16 11A5.200 5.200 0 0 1 18.500 21L20 32H12L13.500 21A5.200 5.200 0 0 1 16 11Z" fill="#1c1f1e" /></S></TrayIcon>
          <TrayIcon $w={79}><S w={36}><circle cx="17.500" cy="17.500" r="17.500" fill="#1c1f1e" /><path d="M9 8H18Q25 8 25 13Q25 17 21 17.500Q25 19 25 23M12 8V28H20M14 17.500H21" stroke="#c8cab0" strokeWidth="3.200" /><circle cx="27" cy="27" r="9" fill="#c8cab0" stroke="#1c1f1e" strokeWidth="1" /><path d="M22.500 27 26 30.500 32 24" stroke="#1c1f1e" strokeWidth="2.400" /></S></TrayIcon>
          <TrayIcon $w={62}><S w={18} h={28} sw={2.2}><path d="M2 7 16 20 9 27V1L16 8 2 21" /></S></TrayIcon>
          <TrayIcon $w={71}><S w={34} h={26}><g stroke="#1c1f1e" strokeWidth="4.200"><path d="M2 9.500A21.500 21.500 0 0 1 32 9.500M8 15.500A13 13 0 0 1 26 15.500" /></g><path d="M17 25 11.500 19.500A8 8 0 0 1 22.500 19.500Z" fill="#1c1f1e" /></S></TrayIcon>
          <TrayIcon $w={86}><S w={50} h={26}><rect x="1.200" y="1.200" width="44" height="23" rx="6.500" stroke="#6f7f80" strokeWidth="2" /><path d="M47.500 9V17Q50 16 50 13Q50 10 47.500 9Z" fill="#6f7f80" /><rect x="4" y="4" width="21" height="17.500" rx="4" fill="#1c1f1e" /><path d="M27 -1 13 14H21L19 27 33 11H25Z" fill="#1c1f1e" stroke="#a9c2c4" strokeWidth="1.500" /></S></TrayIcon>
          <TrayIcon $w={64}><S w={27} sw={2.8}><circle cx="11" cy="11" r="9.200" /><path d="M18 18 25 25" /></S></TrayIcon>
          <TrayIcon $w={62}><S w={28} h={28}><rect x="1.200" y="1.200" width="25.500" height="11" rx="5.500" stroke="#2a2f30" strokeWidth="2.200" /><circle cx="7" cy="6.700" r="3" fill="#2a2f30" /><rect x="0" y="15" width="28" height="13" rx="6.500" fill="#2a2f30" /><circle cx="21.500" cy="21.500" r="3.600" fill="#9fc0cf" /></S></TrayIcon>
          <MenuItem $w={159} $ls={0.1}>Wed 10 Jan</MenuItem>
          <MenuItem $w={109} $ls={-0.1}>09.48</MenuItem>
        </Tray>
      </MenuBar>

      <Window>
        <TabStrip>
          <Lights>
            <Light $c="#ed6a5f" /><Light $c="#f5bf4f" /><Light $c="#61c554" />
            <Archive><S w={34} h={32} sw={3}><g stroke="#5b5b66"><path d="M6 3.500Q6 1.500 8 1.500H26Q28 1.500 28 3.500" /><rect x="1.500" y="8.500" width="31" height="22" rx="4" /><path d="M14 17H20" /></g></S></Archive>
          </Lights>
          <Tabs>
            {tabs.map((t, i) => (
              <Tab key={i} $on={t.on}>
                {t.icon && <TabIcon>{t.icon}</TabIcon>}
                <TabTitle $fade={t.fade}>{t.title}</TabTitle>
                <CloseX />
              </Tab>
            ))}
          </Tabs>
          <StripButtons>
            <S w={24} sw={2.4}><g stroke="#5b5b66"><path d="M12 1V23M1 12H23" /></g></S>
            <S w={24} h={13} sw={2.4}><g stroke="#5b5b66"><path d="M1 1 12 12 23 1" /></g></S>
          </StripButtons>
        </TabStrip>

        <Toolbar>
          <NavButtons>
            <S w={30} h={26} sw={2.8}><path d="M28 13H2M13 2 2 13 13 24" /></S>
            <S w={30} h={26} sw={2.8}><g stroke="#bdbdc3"><path d="M2 13H28M17 2 28 13 17 24" /></g></S>
            <S w={30} h={30} sw={2.8}><path d="M27 18A12.500 12.500 0 1 1 23 6.500" /><path d="M28 2V11H19Z" fill="currentColor" strokeWidth="1" /></S>
          </NavButtons>
          <UrlBar>
            <UrlIcons>
              <S w={30} h={32} sw={2.8}><path d="M15 1.500 28 7Q29 20 23.500 25.500Q20 29 15 31Q10 29 6.500 25.500Q1 20 2 7Z" /></S>
              <S w={24} h={28} sw={2.8}><path d="M5 1.500H15L22.500 9V23Q22.500 26.500 19.500 26.500H5Q1.500 26.500 1.500 23V5Q1.500 1.500 5 1.500Z" /><path d="M15 2V9H22Z" fill="currentColor" /></S>
            </UrlIcons>
            <Url><b>localhost</b>:8000/index.php/administration/user_other_autority</Url>
            <S w={32} h={31} sw={2.6}><path d="M16 1.500 20.300 10.500 30 11.800 22.800 18.600 25 29.500 16 24.500 7 29.500 9.200 18.600 2 11.800 11.700 10.500Z" /></S>
          </UrlBar>
          <ToolIcons>
            <S w={29} h={26} sw={2.6}><path d="M4 1.500H25Q27.500 1.500 27.500 4V11Q27 24 14.500 24.500Q2 24 1.500 11V4Q1.500 1.500 4 1.500ZM8.500 9 14.500 15 20.500 9" /></S>
            <S w={28} h={30} sw={2.6}><path d="M14 1.500V20M5 12 14 21 23 12M1.500 23V25Q1.500 28.500 5 28.500H23Q26.500 28.500 26.500 25V23" /></S>
            <S w={30} h={30}><circle cx="15" cy="15" r="13.600" stroke="currentColor" strokeWidth="2.600" /><circle cx="15" cy="10.500" r="5" fill="currentColor" /><path d="M6.500 18H23.500Q22 24.500 15 24.500Q8 24.500 6.500 18Z" fill="currentColor" /></S>
            <S w={28} h={32} sw={2.6}><path d="M3 10.500H10V6Q10 1.500 14 1.500Q18 1.500 18 6V10.500H23Q26.500 10.500 26.500 14V27Q26.500 30.500 23 30.500H5Q2 30.500 2 27V23H6Q9.500 23 9.500 19.500Q9.500 16 6 16H2V11.500Z" /></S>
            <S w={25} h={20} sw={2.6}><path d="M1.500 1.500H23.500M1.500 10H23.500M1.500 18H23.500" /></S>
          </ToolIcons>
        </Toolbar>
        <Bookmarks>
          <Bookmark $w={226} $ls={-0.1}><FoxLogo s={31} />Getting Started</Bookmark>
          <Bookmark $w={124}><S w={31} h={22}><path d="M2 0H29Q31 0 31 2V22H0V2Q0 0 2 0Z" fill="#e6e4e2" /><path d="M0 22V1L15.500 12 31 1V22H26V9L15.500 17 5 9V22Z" fill="#d54b3d" /></S>Gmail</Bookmark>
          <Bookmark $w={155}><S w={31} h={22}><rect width="31" height="22" rx="5" fill="#ea3323" /><path d="M12 6 21 11 12 16Z" fill="#fff" /></S>YouTube</Bookmark>
          <Bookmark $w={119}><S w={29} h={29}><path d="M0 4Q0 2 2 2H24V27H2Q0 27 0 25Z" fill="#4c9f5b" /><path d="M0 27 24 2V12L10 27Z" fill="#f7d04e" /><path d="M5 27 15 15 25 27Z" fill="#4f86ec" /><path d="M0 25 14 11 17 15 5 28H0Z" fill="#f2e7cf" /><path d="M23 0A6 6 0 0 1 29 6Q29 11 23 18Q17 11 17 6A6 6 0 0 1 23 0Z" fill="#d24a3e" /><circle cx="23" cy="6" r="2.200" fill="#7a2018" /><text x="3" y="12" fontSize="10" fill="#fff" fontFamily="Roboto, sans-serif">G</text></S>Maps</Bookmark>
          <Bookmark $w={160}><S w={31} h={31}><path d="M12 7H29Q31 7 31 9V29Q31 31 29 31H18Z" fill="#dcdcdc" /><path d="M17 31 16 24H23Z" fill="#2e50b0" /><path d="M2 1H13L22 24H2Q0 24 0 22V3Q0 1 2 1Z" fill="#4f86ec" /><text x="4" y="18" fontSize="15" fontWeight="500" fill="#fff" fontFamily="Roboto, sans-serif">G</text><path d="M19 14H29M24 12V14M27 14Q26 20 20 23M21 17Q23 21 28 23" stroke="#6e8088" strokeWidth="1.500" /></S>Translate</Bookmark>
        </Bookmarks>

        <ModuleNav>
          {modules.map((m) => <ModuleTab key={m} $on={m === "System"}>{m}</ModuleTab>)}
        </ModuleNav>
        <OrangeBand />
        <Columns>
          <Sidebar>
            <GroupTitle>User Administration</GroupTitle>
            <MenuList>
              {links.map((l) => <MenuLink key={l}><Star>*</Star>&nbsp;{l}</MenuLink>)}
            </MenuList>
            {groups.map((g) => <GroupTitle key={g}>{g}</GroupTitle>)}
          </Sidebar>
          <Content>
            <Title>Other User Authority</Title>
            <Form>
              {choices.map(([l, v, w, off]) => (
                <Row key={l} $h={52}>
                  <Label>{l}</Label>
                  <Box $w={w} $h={36} $off={off}><span>{v}</span><Chevron c={off ? "#6d6d6d" : "#000"} /></Box>
                </Row>
              ))}
              {flagsA.map((f) => <FlagRow key={f} name={f} />)}
              <Row $h={82}><Label>Branch Name</Label><Box $w={542} $h={40} /></Row>
              {flagsB.map((f) => <FlagRow key={f} name={f} low />)}
              <Row $h={52}><Label $low>Budget Code</Label><Box $w={208} $h={36}><span /><Chevron /></Box></Row>
              <Row $h={52}><Label $low>Account User Code</Label><Box $w={605} $h={36}><span /><Chevron /></Box><Box $w={300} $h={36}><span /><Chevron /></Box></Row>
              <Row $h={84} $top={2}><Label $low>Budget Memo Code</Label><Box $w={542} $h={40} /></Row>
            </Form>
            <Actions><Button $w={109}>Cancel</Button><Button $w={115}>Update</Button></Actions>
          </Content>
          <RightStrip />
        </Columns>
        <Footer>©2012 PT. Asuransi Jiwa Syariah Amanah Jiwa Giri Artha</Footer>
        <PageEnd />
      </Window>

      <DockArea>
        <Dock>
          {dockLeft.map((d, i) => <Slot key={i}><Tile $bg={d.bg} $plain={d.plain}>{d.art}</Tile>{d.dot && <Dot $c={d.dot} />}</Slot>)}
          <Divider />
          {dockRight.map((d, i) => <Slot key={i}><Tile $bg={d.bg} $plain={d.plain}>{d.art}</Tile>{d.dot && <Dot $c={d.dot} />}</Slot>)}
          <Divider />
          <Slot><Tile $bg="transparent" $plain><Docs /></Tile></Slot>
          <Slot><Tile $bg="transparent" $plain><Trash /></Tile></Slot>
        </Dock>
      </DockArea>
    </Desktop>
  );
}
